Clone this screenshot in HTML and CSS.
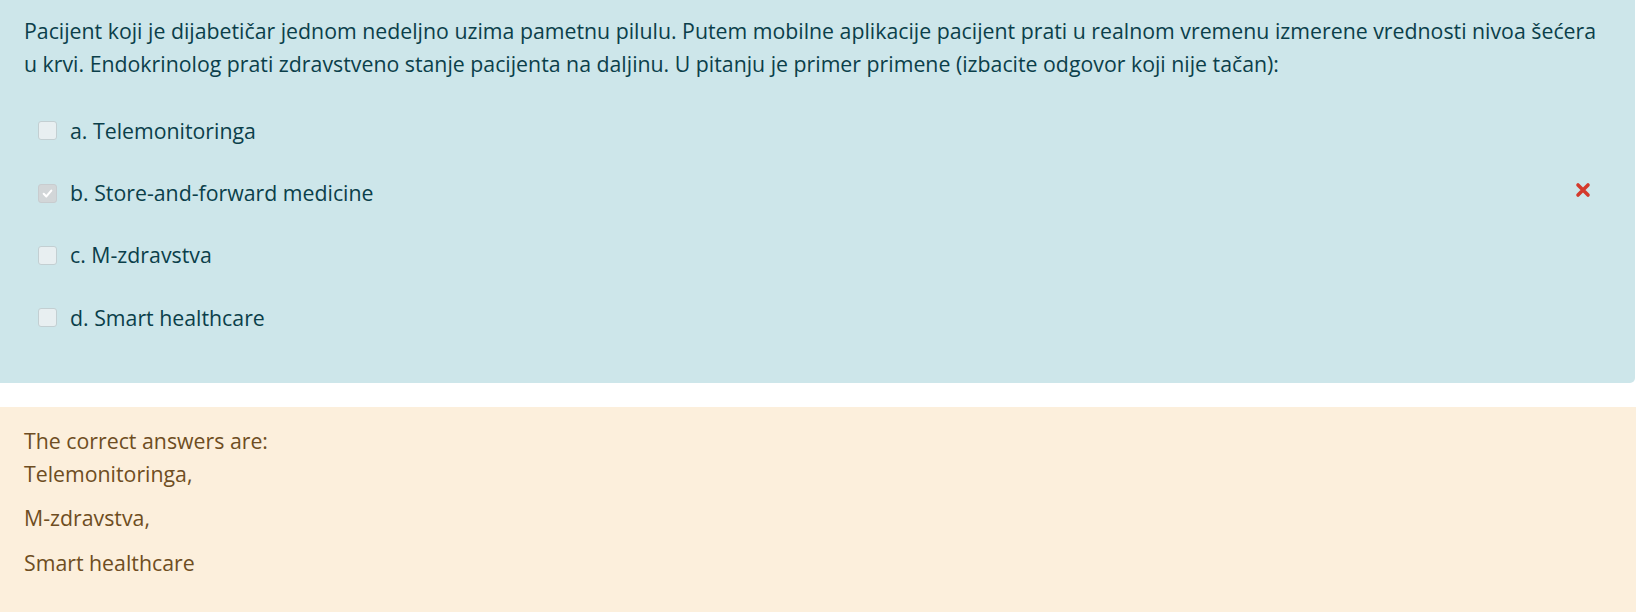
FILE: index.html
```html
<!DOCTYPE html>
<html lang="sr">
<head>
<meta charset="utf-8">
<title>Pitanje</title>
<link rel="stylesheet" href="styles.css">
</head>
<body>
<div class="formulation">
  <div class="qtext">Pacijent koji je dijabetičar jednom nedeljno uzima pametnu pilulu. Putem mobilne aplikacije pacijent prati u realnom vremenu izmerene vrednosti nivoa šećera u krvi. Endokrinolog prati zdravstveno stanje pacijenta na daljinu. U pitanju je primer primene (izbacite odgovor koji nije tačan):</div>
  <div class="answer">
    <div class="option">
      <span class="cb"></span>
      <span class="label">a. Telemonitoringa</span>
    </div>
    <div class="option">
      <span class="cb checked"><svg viewBox="0 0 17 17" width="15" height="15"><path d="M4.2 8.8 L7.2 11.8 L12.8 5.2" fill="none" stroke="#ffffff" stroke-width="2.4" stroke-linecap="round" stroke-linejoin="round"/></svg></span>
      <span class="label">b. Store-and-forward medicine</span>
      <span class="wrong"><svg viewBox="0 0 16 16" width="16" height="16"><path d="M3 3 L13 13 M13 3 L3 13" stroke="#d43a2c" stroke-width="3.6" stroke-linecap="round"/></svg></span>
    </div>
    <div class="option">
      <span class="cb"></span>
      <span class="label">c. M-zdravstva</span>
    </div>
    <div class="option">
      <span class="cb"></span>
      <span class="label">d. Smart healthcare</span>
    </div>
  </div>
</div>
<div class="outcome">
  <div class="rightanswer">The correct answers are:
    <p>Telemonitoringa,</p>
    <p>M-zdravstva,</p>
    <p>Smart healthcare</p>
  </div>
</div>
</body>
</html>
```
FILE: styles.css
```css
html, body {
  margin: 0;
  padding: 0;
  background: #ffffff;
}
body {
  font-family: "Segoe UI", "Open Sans", sans-serif;
  font-size: 21.3px;
  line-height: 32.6px;
  font-variant-ligatures: none;
}
.formulation {
  width: 1635px;
  box-sizing: border-box;
  background: #cde6ea;
  color: #0b3f4a;
  padding: 15.4px 30px 33.8px 24px;
  border-bottom-right-radius: 5px;
}
.qtext {
  margin-bottom: 19.2px;
}
.option {
  display: flex;
  align-items: center;
  height: 62.3px;
}
.cb {
  box-sizing: border-box;
  flex: none;
  width: 19px;
  height: 19px;
  margin-left: 14px;
  margin-right: 13px;
  border: 1px solid #c3cfd2;
  border-radius: 3px;
  background: #e8eff1;
  display: flex;
  align-items: center;
  justify-content: center;
}
.cb.checked {
  background: #d2d6d8;
  border-color: #c8cccf;
}
.wrong {
  margin-left: auto;
  margin-right: 14px;
  margin-top: -7px;
  display: flex;
}
.outcome {
  margin-top: 24px;
  width: 1636px;
  box-sizing: border-box;
  background: #fcefdc;
  color: #6e4d22;
  padding: 18.4px 23px 20px 24px;
}
.rightanswer p {
  margin: 0 0 12px 0;
}
```
